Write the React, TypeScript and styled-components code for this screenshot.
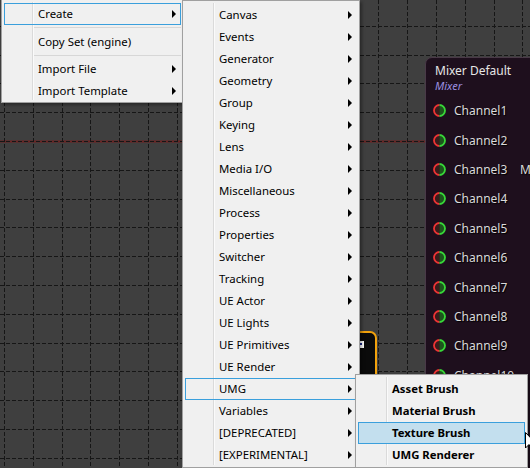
import React from "react";
import styled, { createGlobalStyle, css } from "styled-components";

const GlobalStyle = createGlobalStyle`
  html, body {
    margin: 0;
    padding: 0;
    background: #3f3f3f;
  }
  body {
    font-family: "Noto Sans", "Open Sans", sans-serif;
  }
`;

const Screen = styled.div`
  position: relative;
  width: 530px;
  height: 468px;
  overflow: hidden;
  background: #3f3f3f;
`;

const GridSvg = styled.svg`
  position: absolute;
  left: 0;
  top: 0;
`;

// graph canvas ---------------------------------------------------------

const MixerNode = styled.div`
  position: absolute;
  left: 425px;
  top: 57px;
  width: 150px;
  height: 440px;
  box-sizing: border-box;
  background: #1e0f1d;
  border: 1px solid #4a3a48;
  border-radius: 7px;
  padding: 4px 0 0 9px;
  color: #e4e4e4;
  font-size: 12px;
`;

const NodeTitle = styled.div`
  line-height: 17px;
  color: #e6e6e6;
`;

const NodeType = styled.div`
  font-size: 11px;
  line-height: 13px;
  font-style: italic;
  color: #9c8fe0;
  margin-bottom: 4px;
`;

const ChannelList = styled.div`
  display: flex;
  flex-direction: column;
  margin-left: -2px;
`;

const ChannelRow = styled.div`
  height: 29.4px;
  display: grid;
  grid-template-columns: 13px 58px auto;
  column-gap: 8px;
  align-items: center;
  color: #dadada;
  text-shadow: 1px 1px 1px #000;
  white-space: nowrap;
`;

const OutLabel = styled.span`
  color: #dadada;
`;

const Pin = () => (
  <svg width="13" height="13" viewBox="0 0 13 13">
    <path d="M6.5 1 A5.5 5.5 0 0 0 6.5 12 Z" fill="#3a1c1c" />
    <path d="M6.5 1 A5.5 5.5 0 0 1 6.5 12 Z" fill="#1d561d" />
    <path d="M6.5 1 A5.5 5.5 0 0 0 6.5 12" fill="none" stroke="#ee3434" strokeWidth="1.8" />
    <path d="M6.5 1 A5.5 5.5 0 0 1 6.5 12" fill="none" stroke="#38d838" strokeWidth="1.8" />
  </svg>
);

const OrangeNode = styled.div`
  position: absolute;
  left: 290px;
  top: 331px;
  width: 87px;
  height: 100px;
  box-sizing: border-box;
  background: #0b0b0b;
  border: 2px solid #f2a20c;
  border-radius: 7px;
  display: flex;
  justify-content: flex-end;
  align-items: flex-start;
  padding: 8px 11px 0 0;
`;

const NodeIcon = styled.div`
  width: 5px;
  height: 7px;
  background: #ffffff;
  position: relative;
  &::after {
    content: "";
    position: absolute;
    left: 1px;
    top: 2px;
    width: 2px;
    height: 2px;
    background: #1a2a8a;
  }
`;

// context menus --------------------------------------------------------

const Menu = styled.div<{ $x: number; $y: number; $w: number; $h: number; $bold?: boolean }>`
  position: absolute;
  left: ${(p) => p.$x}px;
  top: ${(p) => p.$y}px;
  width: ${(p) => p.$w}px;
  height: ${(p) => p.$h}px;
  box-sizing: border-box;
  background: #f0f0f0;
  border: 1px solid #a0a0a0;
  padding: 3px 2px 2px;
  display: flex;
  flex-direction: column;
  box-shadow: 2px 2px 3px rgba(0, 0, 0, 0.35);
  font-size: ${(p) => (p.$bold ? "11.3px" : "11.4px")};
  font-weight: ${(p) => (p.$bold ? 700 : 400)};
  color: #000;

  &::before {
    content: "";
    position: absolute;
    left: 30px;
    top: 2px;
    bottom: 2px;
    width: 1px;
    background: #dadada;
    border-right: 1px solid #fafafa;
  }
`;

const Item = styled.div<{ $state?: "open" | "hover" }>`
  position: relative;
  flex: none;
  height: 22px;
  box-sizing: border-box;
  display: flex;
  align-items: center;
  padding: 0 4px 0 33px;
  border: 1px solid transparent;
  white-space: nowrap;

  ${(p) =>
    p.$state === "open" &&
    css`
      border-color: #3a9fdc;
    `}
  ${(p) =>
    p.$state === "hover" &&
    css`
      border-color: #3a9fdc;
      background: #c3dfee;
    `}
`;

const Label = styled.span`
  flex: 1;
  line-height: 20px;
`;

const Arrow = styled.span`
  width: 0;
  height: 0;
  border-left: 4px solid #000;
  border-top: 4px solid transparent;
  border-bottom: 4px solid transparent;
`;

const Separator = styled.div<{ $h?: number }>`
  position: relative;
  flex: none;
  height: ${(p) => p.$h ?? 6}px;
  &::after {
    content: "";
    position: absolute;
    left: 30px;
    right: 0;
    top: 2px;
    height: 1px;
    background: #d7d7d7;
  }
`;

const CursorSvg = styled.svg`
  position: absolute;
  left: 524px;
  top: 431px;
`;

const createItems = [
  "Canvas",
  "Events",
  "Generator",
  "Geometry",
  "Group",
  "Keying",
  "Lens",
  "Media I/O",
  "Miscellaneous",
  "Process",
  "Properties",
  "Switcher",
  "Tracking",
  "UE Actor",
  "UE Lights",
  "UE Primitives",
  "UE Render",
  "UMG",
  "Variables",
  "[DEPRECATED]",
  "[EXPERIMENTAL]",
];

const umgItems = ["Asset Brush", "Material Brush", "Texture Brush", "UMG Renderer"];

const Grid = () => {
  const xs = Array.from({ length: 19 }, (_, i) => Math.round(4 + i * 28.8) + 0.5);
  const ys = Array.from({ length: 18 }, (_, i) => Math.round(-3 + i * 28.8) + 0.5);
  return (
    <GridSvg width="530" height="468">
      <line x1="0" x2="530" y1="141.5" y2="141.5" stroke="#6e2222" strokeWidth="2" />
      {xs.map((x) => (
        <line key={"v" + x} x1={x} x2={x} y1="0" y2="468" stroke="#161616" strokeDasharray="4 2" />
      ))}
      {ys.map((y) => (
        <line key={"h" + y} x1="0" x2="530" y1={y} y2={y} stroke="#161616" strokeDasharray="4 2" />
      ))}
    </GridSvg>
  );
};

export default function App() {
  return (
    <>
      <GlobalStyle />
      <Screen>
        <Grid />

        <OrangeNode>
          <NodeIcon />
        </OrangeNode>

        <MixerNode>
          <NodeTitle>Mixer Default</NodeTitle>
          <NodeType>Mixer</NodeType>
          <ChannelList>
            {Array.from({ length: 11 }, (_, i) => (
              <ChannelRow key={i}>
                <Pin />
                <span>Channel{i + 1}</span>
                {i === 2 && <OutLabel>Mixer</OutLabel>}
              </ChannelRow>
            ))}
          </ChannelList>
        </MixerNode>

        <Menu $x={1} $y={-1} $w={183} $h={104}>
          <Item $state="open">
            <Label>Create</Label>
            <Arrow />
          </Item>
          <Separator />
          <Item>
            <Label>Copy Set (engine)</Label>
          </Item>
          <Separator $h={5} />
          <Item>
            <Label>Import File</Label>
            <Arrow />
          </Item>
          <Item>
            <Label>Import Template</Label>
            <Arrow />
          </Item>
        </Menu>

        <Menu $x={182} $y={0} $w={178} $h={468}>
          {createItems.map((name) => (
            <Item key={name} $state={name === "UMG" ? "open" : undefined}>
              <Label>{name}</Label>
              <Arrow />
            </Item>
          ))}
        </Menu>

        <Menu $x={355} $y={374} $w={173} $h={94} $bold>
          {umgItems.map((name) => (
            <Item key={name} $state={name === "Texture Brush" ? "hover" : undefined}>
              <Label>{name}</Label>
            </Item>
          ))}
        </Menu>

        <CursorSvg width="14" height="22" viewBox="0 0 14 22">
          <path
            d="M1.5 1.5 L1.5 17 L5 13.5 L8 20 L10.5 19 L7.5 12.5 L12 12.5 Z"
            fill="#fff"
            stroke="#000"
            strokeWidth="1"
          />
        </CursorSvg>
      </Screen>
    </>
  );
}
